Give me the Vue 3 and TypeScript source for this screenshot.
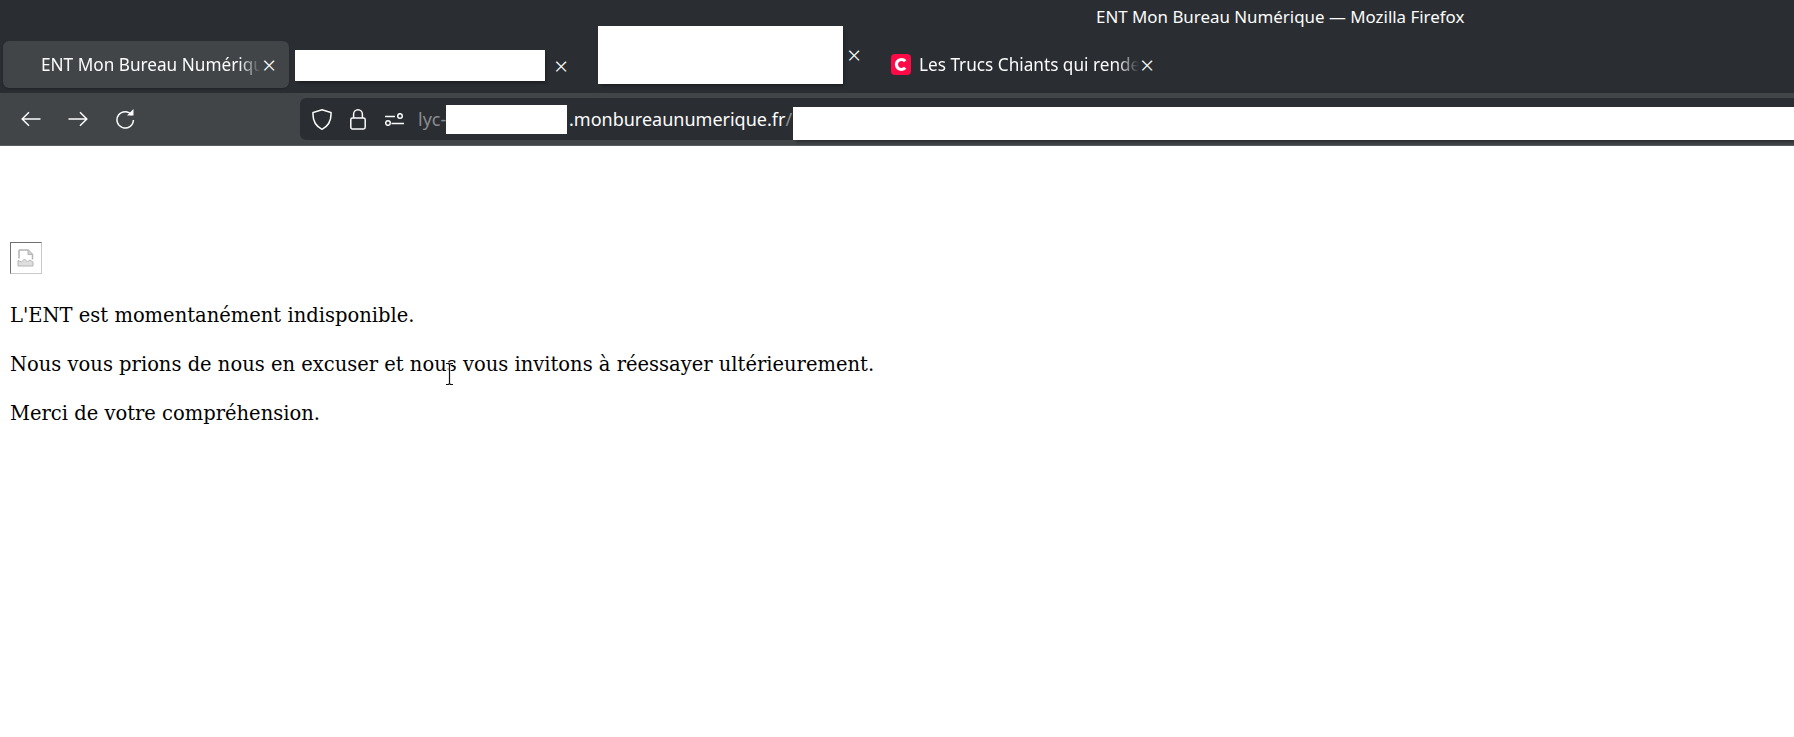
<script setup lang="ts">
const paragraphs: string[] = [
  "L'ENT est momentanément indisponible.",
  'Nous vous prions de nous en excuser et nous vous invitons à réessayer ultérieurement.',
  'Merci de votre compréhension.',
]
</script>

<template>
  <div class="window">
    <header class="titlebar">
      <div class="title">ENT Mon Bureau Numérique — Mozilla Firefox</div>
      <div class="tabs">
        <div class="tab tab-active">
          <span class="tab-label label-active">ENT Mon Bureau Numérique</span>
          <span class="close">×</span>
        </div>
        <div class="tab tab-second">
          <div class="mask mask-wide"></div>
          <span class="close">×</span>
        </div>
        <div class="tab tab-third">
          <div class="mask mask-tall"></div>
          <span class="close">×</span>
        </div>
        <div class="tab tab-fourth">
          <svg class="favicon" viewBox="0 0 20 21" width="20" height="21">
            <rect width="20" height="21" rx="4" fill="#ff0a47" />
            <path d="M14.2 7.2a5 5 0 1 0 0 6.6" fill="none" stroke="#fff" stroke-width="3.2" />
          </svg>
          <span class="tab-label label-fourth">Les Trucs Chiants qui rendent</span>
          <span class="close">×</span>
        </div>
      </div>
    </header>

    <nav class="toolbar">
      <div class="nav-buttons">
        <svg class="icon" width="20" height="16" viewBox="0 0 20 16"><path d="M19.5 8H1.5M8 1.2 1.2 8 8 14.8" /></svg>
        <svg class="icon" width="20" height="16" viewBox="0 0 20 16"><path d="M.5 8h18M12 1.2 18.8 8 12 14.8" /></svg>
        <svg class="icon" width="20" height="20" viewBox="0 0 20 20">
          <path d="M16.8 6A8.2 8.2 0 1 0 18.4 11" />
          <path class="solid" d="M12 6.5h6.5V0z" />
        </svg>
      </div>
      <div class="urlbar">
        <svg class="icon shield" width="20" height="21" viewBox="0 0 20 21"><path d="M10 .8 19 3.6c.5 8.6-2.5 13.4-9 16.700C3.500 17 .5 12.200 1 3.600z" /></svg>
        <svg class="icon lock" width="16" height="21" viewBox="0 0 16 21"><path d="M3.600 9V5.200a4.400 4.400 0 0 1 8.800 0V9M2.500 9h11a1.700 1.700 0 0 1 1.700 1.700v7.600a1.700 1.700 0 0 1-1.700 1.700h-11A1.700 1.700 0 0 1 .8 18.300v-7.600A1.700 1.700 0 0 1 2.500 9z" /></svg>
        <svg class="icon tune" width="19" height="13" viewBox="0 0 19 13"><path d="M0 3.500h10M6.500 10.500H19" /><circle cx="15" cy="3" r="2.300" /><circle cx="3" cy="10" r="2.300" /></svg>
        <span class="url-dim">lyc-</span>
        <div class="mask mask-host"></div>
        <span class="url-main">.monbureaunumerique.fr</span><span class="url-slash">/</span>
        <div class="mask mask-path"></div>
      </div>
    </nav>

    <main class="page">
      <div class="broken-image">
        <svg width="18" height="18" viewBox="0 0 18 18">
          <path d="M2 1h9l4.500 4.500v5M2 1v8.500" fill="none" stroke="#b4b4b4" stroke-width="1.500" />
          <path d="M11 1v4.500h4.500" fill="#d0d0d0" stroke="#b4b4b4" />
          <path d="M1 11.500l3.500 1.500 3-3 3 3 2-2 3.500 2v4H1z" fill="#dedede" stroke="#b4b4b4" />
        </svg>
      </div>
      <p v-for="text in paragraphs" :key="text" class="message">{{ text }}</p>
      <svg class="cursor" width="11" height="25" viewBox="0 0 11 25">
        <path d="M2 1.500h2.500l1 1 1-1H9M5.500 2.500v19M2 22.500h2.500l1-1 1 1H9" fill="none" stroke="#fff" stroke-width="3" opacity=".7" />
        <path d="M2 1.500h2.500l1 1 1-1H9M5.500 2.500v19M2 22.500h2.500l1-1 1 1H9" fill="none" stroke="#111" stroke-width="1.200" />
      </svg>
    </main>
  </div>
</template>

<style>
html, body { margin: 0; background: #fff; overflow: hidden; }
</style>

<style scoped>
.window { width: 1794px; height: 737px; display: flex; flex-direction: column; font-family: "Noto Sans", sans-serif; position: relative; overflow: hidden; }
.titlebar { height: 93px; box-sizing: border-box; background: #2a2e32; position: relative; color: #fcfcfc; }
.title { position: absolute; left: 1096px; top: 6px; font-size: 16.900px; line-height: 22px; white-space: nowrap; }
.tabs { display: flex; padding-left: 3px; padding-top: 26px; align-items: flex-start; }
.tab { display: flex; align-items: center; font-size: 17.200px; }
.tab-active { width: 286px; height: 47px; margin-top: 15px; box-sizing: border-box; padding-left: 38px; background: #414548; border-radius: 6px; box-shadow: 0 1px 2px rgba(0,0,0,.25); }
.tab-label { display: block; overflow: hidden; white-space: nowrap; line-height: 24px; }
.label-active { width: 220px; -webkit-mask-image: linear-gradient(to right, #000 90%, transparent); mask-image: linear-gradient(to right, #000 90%, transparent); }
.close { width: 16px; text-align: center; font-size: 24px; line-height: 24px; flex: none; font-weight: 300; }
.tab-second { margin-left: 6px; margin-top: 24px; height: 31px; }
.mask { background: #fff; box-shadow: 2px 3px 3px -1px rgba(0,0,0,.35); flex: none; }
.mask-wide { width: 250px; height: 31px; margin-right: 8px; }
.tab-third { margin-left: 29px; height: 58px; }
.mask-tall { width: 245px; height: 58px; margin-right: 3px; }
.tab-fourth { margin-left: 29px; margin-top: 28px; height: 21px; }
.favicon { flex: none; margin-right: 8px; }
.label-fourth { width: 220px; -webkit-mask-image: linear-gradient(to right, #000 90%, transparent); mask-image: linear-gradient(to right, #000 90%, transparent); }
.toolbar { height: 53px; box-sizing: border-box; background: #414548; display: flex; padding-top: 5px; border-bottom: 1px solid #5a5e62; }
.nav-buttons { width: 300px; height: 42px; box-sizing: border-box; padding-left: 21px; display: flex; align-items: center; gap: 27px; flex: none; }
.icon { flex: none; }
.icon path, .icon circle { fill: none; stroke: #fcfcfc; stroke-width: 1.500; }
.icon .solid { fill: #fcfcfc; stroke: none; }
.urlbar { flex: 1; height: 42px; background: #2a2e32; border-radius: 6px 0 0 6px; display: flex; align-items: center; padding-left: 12px; font-size: 18px; color: #fcfcfc; }
.lock { margin-left: 18px; }
.tune { margin-left: 19px; }
.url-dim { margin-left: 14px; color: #8a8d90; width: 28px; overflow: hidden; white-space: nowrap; }
.mask-host { width: 121px; height: 29px; box-shadow: none; }
.url-main { white-space: nowrap; margin-left: 2px; }
.url-slash { color: #8a8d90; }
.mask-path { flex: 1; height: 33px; align-self: flex-end; margin-left: 1px; }
.page { flex: 1; background: #fff; padding: 96px 0 0 10px; position: relative; font-family: "DejaVu Serif", serif; color: #000; }
.broken-image { width: 30px; height: 30px; border: 1px solid #c8c8c8; border-top-color: #707070; border-left-color: #707070; display: flex; align-items: center; justify-content: center; margin-bottom: 28px; }
.message { margin: 0 0 21px; font-size: 19.500px; line-height: 28px; white-space: nowrap; }
.cursor { position: absolute; left: 444px; top: 216px; }
</style>
